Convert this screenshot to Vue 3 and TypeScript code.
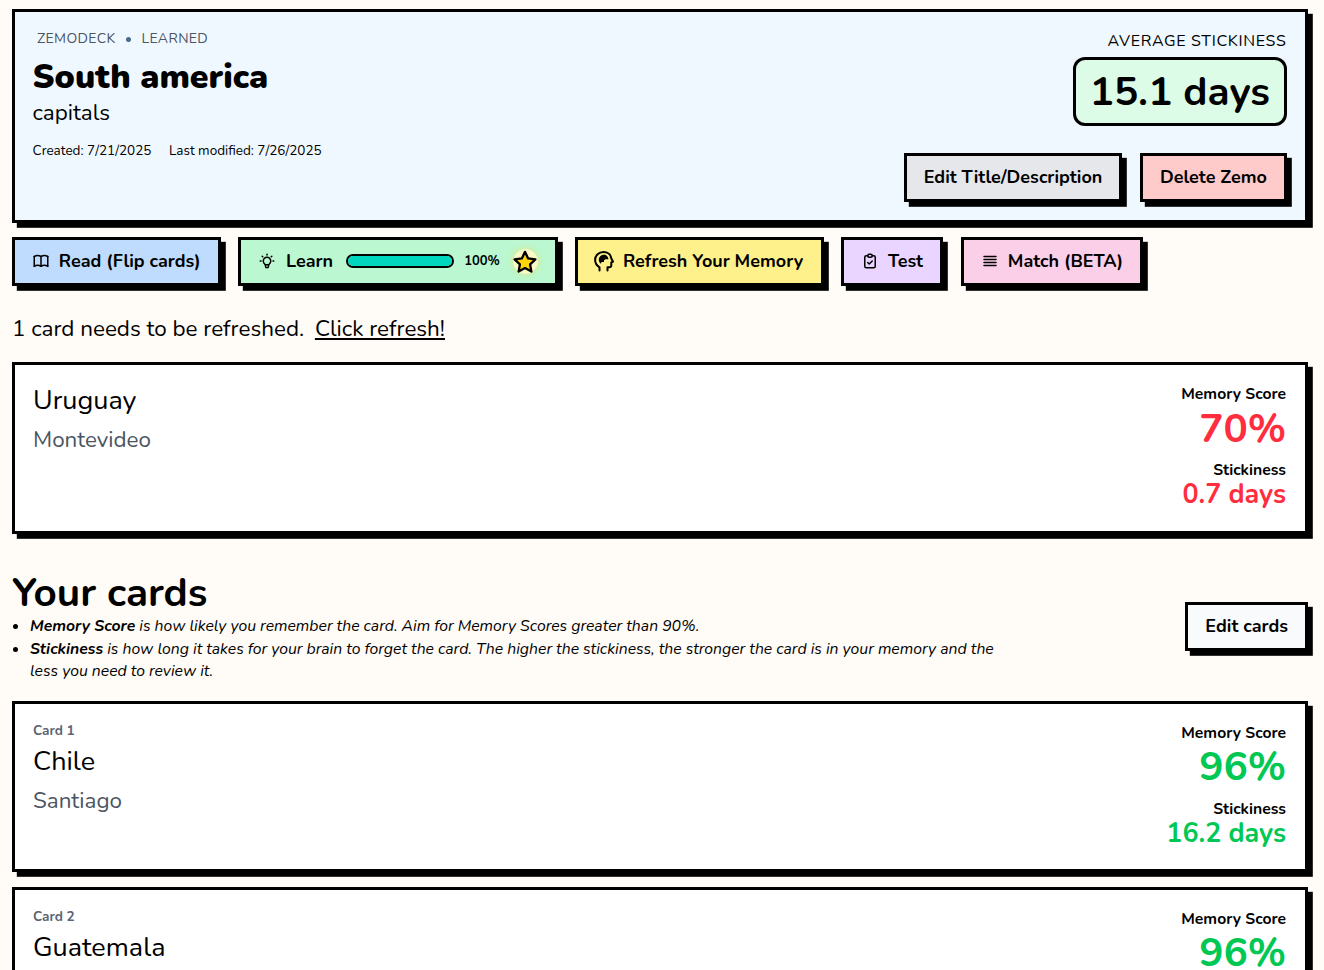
<script setup lang="ts">
interface Card { label: string; front: string; back: string; score: string; stick: string; tone: string }
const refresh: Card = { label: '', front: 'Uruguay', back: 'Montevideo', score: '70%', stick: '0.7 days', tone: 'bad' }
const cards: Card[] = [
  { label: 'Card 1', front: 'Chile', back: 'Santiago', score: '96%', stick: '16.2 days', tone: 'good' },
  { label: 'Card 2', front: 'Guatemala', back: 'Guatemala City', score: '96%', stick: '16.2 days', tone: 'good' },
]
</script>

<template>
  <div class="page">
    <header class="hero">
      <div class="hero-left">
        <div class="crumbs"><span>ZEMODECK</span><i class="dot"></i><span>LEARNED</span></div>
        <h1>South america</h1>
        <p class="desc">capitals</p>
        <div class="dates"><span>Created: 7/21/2025</span><span>Last modified: 7/26/2025</span></div>
      </div>
      <div class="hero-right">
        <div class="avg-label">AVERAGE STICKINESS</div>
        <div class="avg-value">15.1 days</div>
        <div class="hero-actions">
          <button class="btn grey">Edit Title/Description</button>
          <button class="btn pink">Delete Zemo</button>
        </div>
      </div>
    </header>

    <nav class="modes">
      <button class="btn mode blue">
        <svg class="ico" viewBox="0 0 24 24"><path d="M3 19a9 9 0 0 1 9 0a9 9 0 0 1 9 0" /><path d="M3 6a9 9 0 0 1 9 0a9 9 0 0 1 9 0" /><path d="M3 6v13" /><path d="M12 6v13" /><path d="M21 6v13" /></svg>
        Read (Flip cards)
      </button>
      <button class="btn mode green">
        <svg class="ico bulb" viewBox="0 0 24 24"><path d="M3 12h1m8-9v1m8 8h1m-15.4-6.4l.7.7m12.1-.7l-.7.7" /><path d="M9 16a5 5 0 1 1 6 0a3.5 3.5 0 0 0-1 3a2 2 0 0 1-4 0a3.5 3.5 0 0 0-1-3" /><path d="M9.7 17h4.6" /></svg>
        Learn
        <span class="bar"><span class="fill" :style="{ width: '100%' }"></span></span>
        <span class="pct">100%</span>
        <span class="star-wrap">
          <svg class="star" viewBox="0 0 24 24"><path d="M12 2.6l2.9 6.100 6.700.9-4.900 4.600 1.200 6.600-5.900-3.200-5.900 3.200 1.200-6.600-4.900-4.600 6.700-.9z" /></svg>
        </span>
      </button>
      <button class="btn mode yellow">
        <svg class="ico head" viewBox="2.5 2 20 21"><path d="M8 21.500v-3.200C5.400 16.700 3.600 14 3.600 10.800 3.600 6.400 7.400 3 12 3c4.200 0 7.400 2.800 7.800 6.600l1.700 3-1.700.9v2.700a2 2 0 0 1-2 2H16v3.300" /><path class="solid" d="M12.500 5.800c-3 0-5.200 2.200-5.200 5 0 1.500.7 2.900 1.900 3.900l1-1.700h2.300v-2c.8 0 1.200-.4 1.300-.8h2.800c.2 0 .3-.2.3-.4C16.600 7.500 15 5.800 12.500 5.800z" /></svg>
        Refresh Your Memory
      </button>
      <button class="btn mode purple">
        <svg class="ico" viewBox="0 0 24 24"><path d="M9 5H7a2 2 0 0 0-2 2v12a2 2 0 0 0 2 2h10a2 2 0 0 0 2-2V7a2 2 0 0 0-2-2h-2" /><rect x="9" y="3" width="6" height="4" rx="2" /><path d="M9 14l2 2 4-4" /></svg>
        Test
      </button>
      <button class="btn mode rose">
        <svg class="ico" viewBox="0 0 24 24"><path d="M4 6h16M4 10h16M4 14h16M4 18h16" /></svg>
        Match (BETA)
      </button>
    </nav>

    <p class="notice">1 card needs to be refreshed. <a href="#" class="link">Click refresh!</a></p>

    <article class="card first">
      <div>
        <div class="front">{{ refresh.front }}</div>
        <div class="back">{{ refresh.back }}</div>
      </div>
      <div class="stats">
        <div class="stat-label">Memory Score</div>
        <div class="score" :class="refresh.tone">{{ refresh.score }}</div>
        <div class="stat-label second">Stickiness</div>
        <div class="stick" :class="refresh.tone">{{ refresh.stick }}</div>
      </div>
    </article>

    <section class="intro">
      <div class="intro-text">
        <h2>Your cards</h2>
        <ul>
          <li><b>Memory Score</b> is how likely you remember the card. Aim for Memory Scores greater than 90%.</li>
          <li><b>Stickiness</b> is how long it takes for your brain to forget the card. The higher the stickiness, the stronger the card is in your memory and the less you need to review it.</li>
        </ul>
      </div>
      <button class="btn edit">Edit cards</button>
    </section>

    <article v-for="c in cards" :key="c.label" class="card">
      <div>
        <div class="card-no">{{ c.label }}</div>
        <div class="front">{{ c.front }}</div>
        <div class="back">{{ c.back }}</div>
      </div>
      <div class="stats">
        <div class="stat-label">Memory Score</div>
        <div class="score" :class="c.tone">{{ c.score }}</div>
        <div class="stat-label second">Stickiness</div>
        <div class="stick" :class="c.tone">{{ c.stick }}</div>
      </div>
    </article>
  </div>
</template>

<style>
html, body { margin: 0; background: #fffbf6; overflow: hidden; }
</style>

<style scoped>
.page {
  font-family: Nunito, Mulish, Lato, "Open Sans", sans-serif;
  color: #000;
  padding: 9px 16px 0 12px;
  height: 961px;
  overflow: hidden;
}
.hero {
  display: flex;
  justify-content: space-between;
  box-sizing: border-box;
  height: 213.6px;
  background: #f0f8ff;
  border: 3px solid #000;
  box-shadow: 4.8px 4.8px 0 #000;
  padding: 18px 18.4px 18px 17.6px;
}
.crumbs { display: flex; align-items: center; gap: 9.5px; padding-left: 4.4px; font-size: 14px; line-height: 18px; color: #4b5563; letter-spacing: .35px; }
.dot { width: 5px; height: 5px; border-radius: 50%; background: #4b6a8a; margin: 0 1px; }
h1 { margin: 9px 0 0; font-size: 33.75px; line-height: 40px; font-weight: 900; }
.desc { margin: 0; font-size: 22.4px; line-height: 32px; }
.dates { display: flex; gap: 17.6px; margin-top: 12px; font-size: 13.5px; line-height: 20px; }
.hero-right { display: flex; flex-direction: column; align-items: flex-end; }
.avg-label { font-size: 16px; line-height: 20px; letter-spacing: .66px; margin-top: 1px; }
.avg-value { box-sizing: border-box; height: 69px; margin: 6px -.4px 0 0; padding: 1px 14px 0; display: flex; align-items: center; background: #dcfce7; border: 3px solid #000; border-radius: 12px; font-size: 40.4px; font-weight: 700; }
.hero-actions { display: flex; gap: 18px; margin-top: 27px; }
.btn { font: inherit; color: #000; box-sizing: border-box; height: 49px; display: inline-flex; align-items: center; padding: 0 16.8px; border: 3px solid #000; box-shadow: 4.8px 4.8px 0 #000; font-size: 18px; font-weight: 700; white-space: nowrap; cursor: pointer; }
.grey { background: #e5e7eb; }
.pink { background: #fecaca; }
.blue { background: #bfdbfe; }
.green { background: #bbf7d0; }
.yellow { background: #fef08a; padding-right: 17.3px; }
.purple { background: #e9d5ff; padding-right: 17.4px; }
.rose { background: #fbcfe8; }
.modes { display: flex; gap: 17.6px; margin-top: 14.4px; }
.mode { gap: 9px; }
.ico { width: 18px; height: 18px; fill: none; stroke: #000; stroke-width: 2; stroke-linecap: round; stroke-linejoin: round; flex: none; }
.bulb { margin-right: 1px; }
.head { width: 20px; height: 21px; margin-left: -1px; }
.head .solid { fill: #000; stroke: none; }
.bar { width: 108px; height: 14px; margin-left: 4px; box-sizing: border-box; border: 2px solid #000; border-radius: 7px; overflow: hidden; display: block; background: #fff; }
.fill { display: block; height: 100%; background: #00d5be; }
.pct { font-size: 13px; margin-left: 1px; }
.star-wrap { width: 25px; height: 25px; margin-left: 4px; border-radius: 50%; background: radial-gradient(circle, #fef9c3 55%, rgba(254, 249, 195, .45)); box-shadow: 0 0 6px rgba(253, 224, 71, .6); display: flex; align-items: center; justify-content: center; }
.star { width: 26px; height: 26px; margin-top: 2px; fill: #ffd60a; stroke: #000; stroke-width: 2.1; stroke-linejoin: round; flex: none; }
.notice { margin: 27px 0 0; font-size: 22.45px; line-height: 32px; }
.link { color: #000; text-decoration: underline; margin-left: 5px; }
.card { display: flex; justify-content: space-between; box-sizing: border-box; background: #fff; border: 3px solid #000; box-shadow: 4.8px 4.8px 0 #000; padding: 17px 19px 17px 18px; height: 171.6px; margin-bottom: 14.4px; }
.first { margin-top: 17px; }
.first .front { margin-top: 1px; }
.card-no { margin: -1px 0 1px; font-size: 13.6px; font-weight: 700; line-height: 22px; color: #5b6573; }
.front { font-size: 27px; line-height: 36px; margin-top: 2px; }
.back { font-size: 22.4px; line-height: 32px; color: #4b5563; margin-top: 5px; }
.stats { text-align: right; }
.stat-label { font-size: 15.7px; font-weight: 700; line-height: 24px; }
.stat-label.second { margin-top: 6.6px; }
.score { font-size: 40.5px; font-weight: 700; line-height: 46px; margin-top: -.4px; }
.stick { font-size: 26.8px; font-weight: 700; line-height: 25px; }
.bad { color: #ff2d3d; }
.good { color: #00c853; }
.intro { display: flex; justify-content: space-between; align-items: center; margin-top: 37px; margin-bottom: 18.4px; }
.intro-text { width: 990px; }
h2 { margin: 0; font-size: 40.4px; line-height: 44px; font-weight: 700; }
ul { margin: 0; padding-left: 18px; font-size: 15.75px; line-height: 22.2px; font-style: italic; }
li + li { margin-top: 1.2px; }
.edit { background: #f8fafc; padding: 0 17px; }
</style>
